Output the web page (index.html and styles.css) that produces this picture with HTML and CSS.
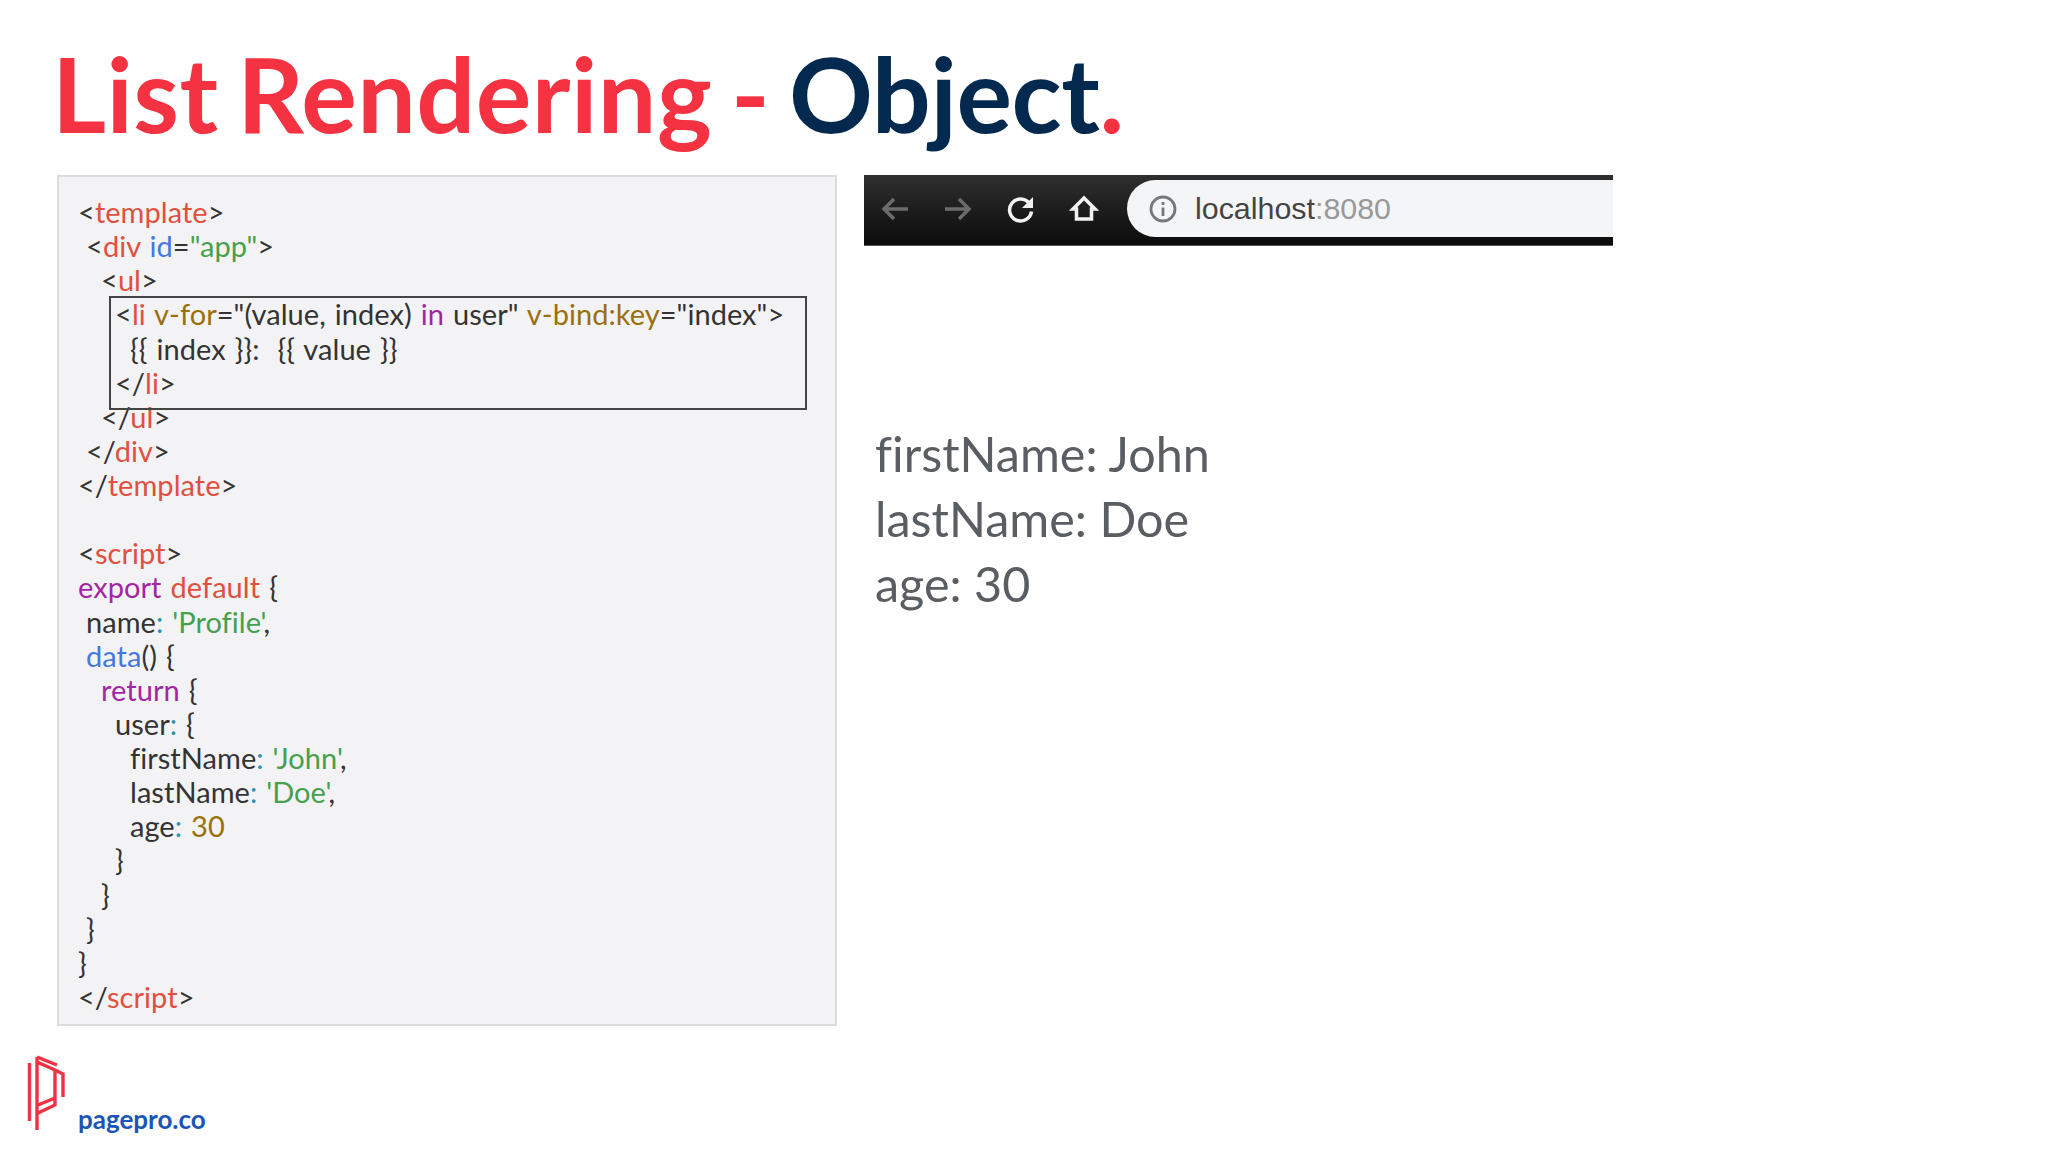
FILE: index.html
```html
<!DOCTYPE html>
<html lang="en">
<head>
<meta charset="utf-8">
<title>List Rendering - Object</title>
<link rel="stylesheet" href="styles.css">
</head>
<body>
<div class="page">
  <h1 class="title"><span class="red">List Rendering - </span><span class="navy">Object</span><span class="red">.</span></h1>
  <div class="content">
    <div class="code">
      <div class="l">&lt;<span class="r">template</span>&gt;</div>
      <div class="l i1">&lt;<span class="r">div</span> <span class="b">id</span>=<span class="g">"app"</span>&gt;</div>
      <div class="l i2">&lt;<span class="r">ul</span>&gt;</div>
      <div class="l i3">&lt;<span class="r">li</span> <span class="o">v-for</span>="(value, index) <span class="p">in</span> user" <span class="o">v-bind:key</span>="index"&gt;</div>
      <div class="l i4">{{ index }}:&nbsp; {{ value }}</div>
      <div class="l i3">&lt;/<span class="r">li</span>&gt;</div>
      <div class="l i2">&lt;/<span class="r">ul</span>&gt;</div>
      <div class="l i1">&lt;/<span class="r">div</span>&gt;</div>
      <div class="l">&lt;/<span class="r">template</span>&gt;</div>
      <div class="l">&nbsp;</div>
      <div class="l">&lt;<span class="r">script</span>&gt;</div>
      <div class="l"><span class="p">export</span> <span class="r">default</span> {</div>
      <div class="l i1">name<span class="c">:</span> <span class="g">'Profile'</span>,</div>
      <div class="l i1"><span class="b">data</span>() {</div>
      <div class="l i2"><span class="p">return</span> {</div>
      <div class="l i3">user<span class="c">:</span> {</div>
      <div class="l i4">firstName<span class="c">:</span> <span class="g">'John'</span>,</div>
      <div class="l i4">lastName<span class="c">:</span> <span class="g">'Doe'</span>,</div>
      <div class="l i4">age<span class="c">:</span> <span class="o">30</span></div>
      <div class="l i3">}</div>
      <div class="l i2">}</div>
      <div class="l i1">}</div>
      <div class="l">}</div>
      <div class="l">&lt;/<span class="r">script</span>&gt;</div>
      <div class="highlight"></div>
    </div>
    <div class="side">
      <div class="browser">
        <div class="nav">
          <svg class="ico" viewBox="0 0 32 32"><path class="dim" d="M29 16H5M15 6 5 16l10 10"/></svg>
          <svg class="ico" viewBox="0 0 32 32"><path class="dim" d="M3 16h24M17 6l10 10-10 10"/></svg>
          <svg class="ico" viewBox="0 0 32 32"><path class="lit" d="M24.5 10.5a11 11 0 1 0 2 8"/><path class="fill" d="M28 4v11H17z"/></svg>
          <svg class="ico" viewBox="0 0 32 32"><path class="lit" d="M16 5 5 16h3.500v10h15V16H27z"/></svg>
        </div>
        <div class="url">
          <svg class="info" viewBox="0 0 28 28"><circle cx="14" cy="14" r="12"/><path d="M14 12.500V21M14 7v3"/></svg>
          <span class="host">localhost</span><span class="port">:8080</span>
        </div>
      </div>
      <div class="output">
        <div>firstName: John</div>
        <div>lastName: Doe</div>
        <div>age: 30</div>
      </div>
    </div>
  </div>
  <div class="brand">
    <svg class="logo" viewBox="0 0 50 85">
      <path d="M9.500 13V71M17 7V80M17 7 37 15M17 12l18 8 8 4V47M35 20V56M18 55l17-7M18 63l17-8"/>
    </svg>
    <span class="brand-name">pagepro.co</span>
  </div>
</div>
</body>
</html>
```
FILE: styles.css
```css
* { box-sizing: border-box; }
html, body { margin: 0; padding: 0; background: #fff; }
.page { width: 2048px; height: 1152px; padding: 0 0 0 55px; overflow: hidden; font-family: "Lato", sans-serif; font-variant-ligatures: none; }
.title { margin: 0 0 0 -3px; height: 175px; padding-top: 34px; font-size: 104px; line-height: 118px; font-weight: 700; word-spacing: -7px; white-space: nowrap; }
.red { color: #f53241; letter-spacing: 0.45px; }
.navy { color: #04294f; letter-spacing: -0.4px; }
.content { display: flex; align-items: flex-start; gap: 27px; padding-left: 2px; }
.code { position: relative; width: 780px; height: 851px; padding: 18px 0 0 19px; background: #f3f3f5; border: 2px solid #dcdcdc; font-size: 29px; line-height: 34.13px; color: #333; }
.l { height: 34.13px; white-space: pre; letter-spacing: 0.05px; word-spacing: 1.5px; }
.i1 { padding-left: 8px; }
.i2 { padding-left: 23px; }
.i3 { padding-left: 37px; }
.i4 { padding-left: 52px; }
.r { color: #e0503f; }
.b { color: #4478e0; }
.g { color: #46a04e; }
.o { color: #99700a; }
.p { color: #a226a4; }
.c { color: #2a8fb0; }
.highlight { position: absolute; left: 50px; top: 119px; width: 698px; height: 114px; border: 2px solid #444; }
.side { display: flex; flex-direction: column; width: 749px; }
.browser { display: flex; align-items: flex-start; height: 71px; padding-top: 5px; background: linear-gradient(#2f2f2f, #0b0b0b); border-bottom: 1px solid #555; }
.nav { display: flex; gap: 31px; width: 263px; height: 57px; padding-left: 15px; align-items: center; }
.ico { width: 32px; height: 32px; fill: none; stroke-width: 3.5; }
.dim { stroke: #6c6c6c; }
.lit { stroke: #f2f2f2; }
.fill { fill: #f2f2f2; stroke: none; }
.url { flex: 1; display: flex; align-items: center; height: 57px; padding-left: 22px; background: #f4f5f6; border-radius: 29px 0 0 29px; font-family: "Liberation Sans", sans-serif; font-size: 30.400px; }
.info { width: 28px; height: 28px; margin-right: 18px; fill: none; stroke: #777; stroke-width: 2.8; }
.host { color: #444; }
.port { color: #999; }
.output { margin-top: 175px; padding-left: 11px; font-size: 48.500px; line-height: 65px; color: #5a5e62; }
.brand { display: flex; align-items: flex-end; margin-top: 24px; margin-left: -35px; }
.logo { width: 50px; height: 85px; fill: none; stroke: #ee3244; stroke-width: 3.400; }
.brand-name { margin: 0 0 1px 8px; font-size: 26px; line-height: 30px; font-weight: 700; color: #1c55b5; }
```
